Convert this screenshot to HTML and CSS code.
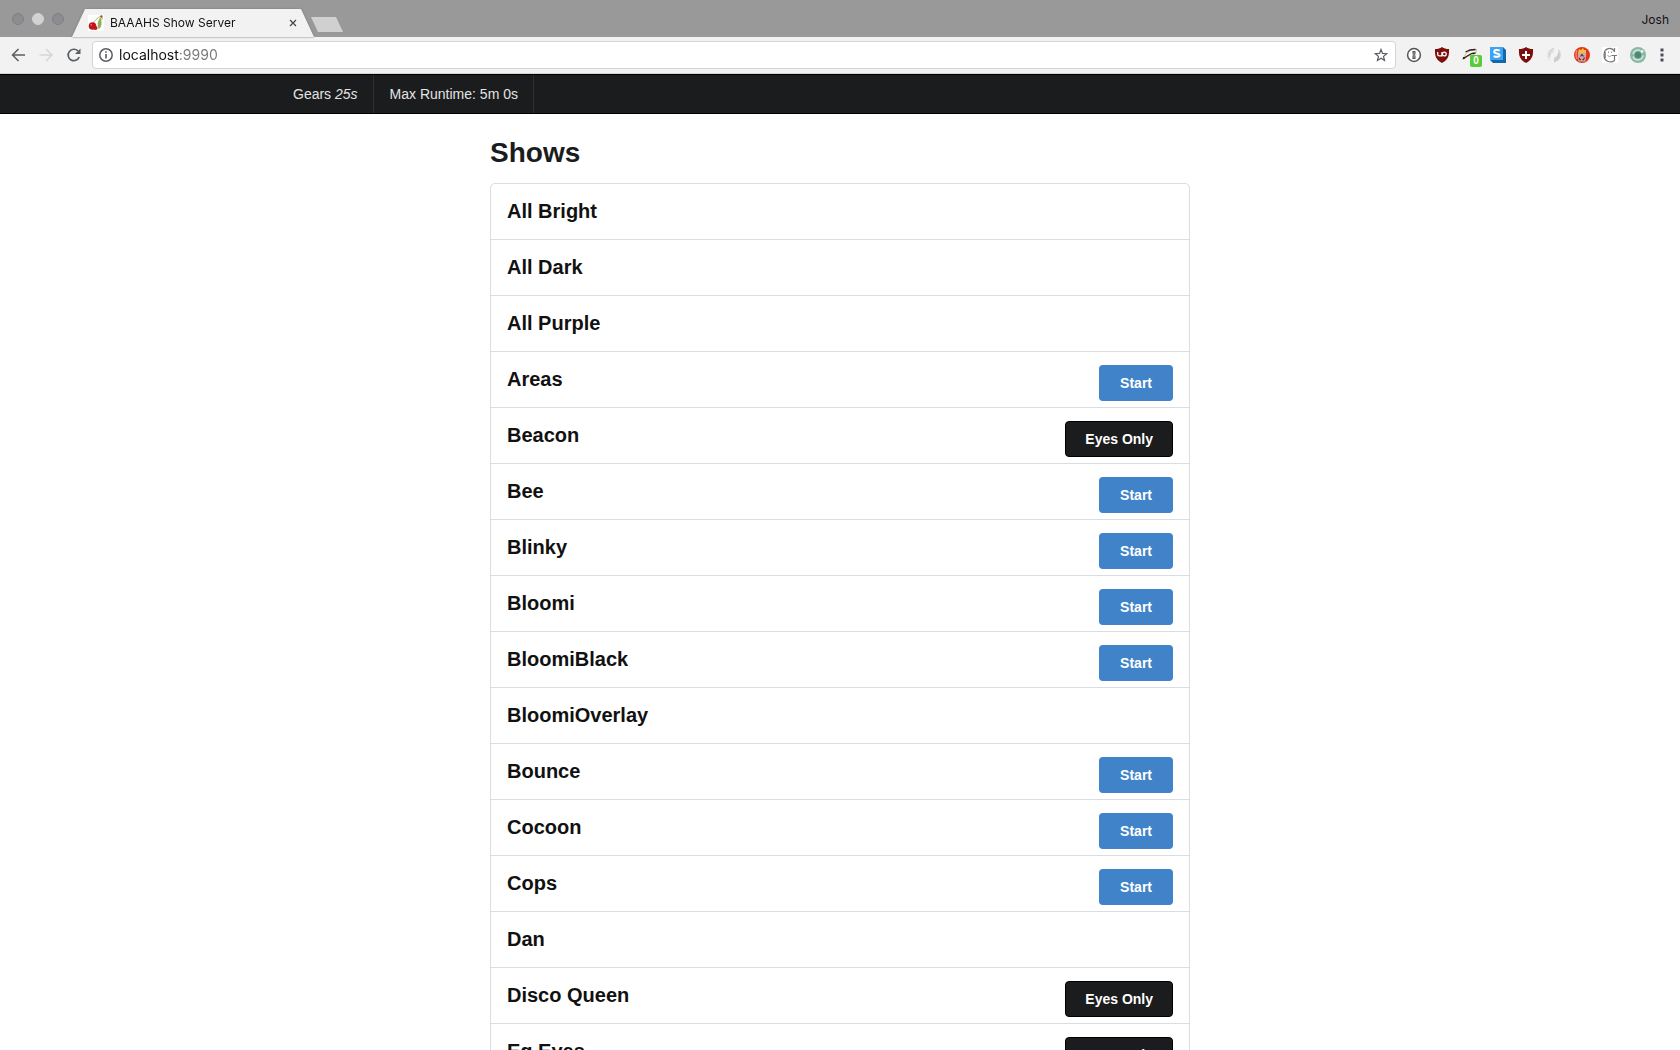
FILE: index.html
```html
<!DOCTYPE html>
<html lang="en">
<head>
    <meta charset="UTF-8">
    <meta name="viewport" content="width=device-width, initial-scale=1.0">
    <title>BAAAHS Show Server</title>
    <link rel="stylesheet" href="styles.css">
</head>
<body>
    <header class="browser">
        <div class="tabbar">
            <div class="lights">
                <span class="light"></span>
                <span class="light middle"></span>
                <span class="light"></span>
            </div>
            <div class="tab-outline">
                <div class="tab">
                    <svg width="16" height="16" viewBox="0 0 16 16">
                        <rect width="16" height="16" fill="#fff"/>
                        <path d="M13 1C9 3 6 6 5 9M14 1v4" stroke="#a9b860" stroke-width="1" fill="none"/>
                        <path d="M12.500 2c-3 4-3.500 8-2 12 3-1 4-6 2-12z" fill="#8fb055"/>
                        <path d="M12 1l2-1 .6 2-1.600 1z" fill="#9a5a35"/>
                        <circle cx="4.500" cy="11" r="3.800" fill="#c4141c"/>
                        <circle cx="7.500" cy="13" r="2" fill="#c4141c"/>
                        <circle cx="3.200" cy="9.800" r=".8" fill="#e88"/>
                    </svg>
                    <span class="tab-title">BAAAHS Show Server</span>
                    <button class="icon close" aria-label="Close tab">
                        <svg width="8" height="8" viewBox="0 0 8 8"><path d="M1 1l6 6M7 1L1 7" stroke="#444" stroke-width="1.200"/></svg>
                    </button>
                </div>
            </div>
            <button class="new-tab" aria-label="New tab"></button>
            <span class="profile">Josh</span>
        </div>
        <div class="toolbar">
            <button class="icon" aria-label="Back">
                <svg width="16" height="16" viewBox="0 0 16 16"><path d="M15 8H3M8.500 2l-6 6 6 6" fill="none" stroke="#5a5d63" stroke-width="1.500"/></svg>
            </button>
            <button class="icon" aria-label="Forward">
                <svg width="16" height="16" viewBox="0 0 16 16"><path d="M1.500 8h12M8 2l6 6-6 6" fill="none" stroke="#d6d6d6" stroke-width="1.500"/></svg>
            </button>
            <button class="icon" aria-label="Reload">
                <svg width="16" height="16" viewBox="0 0 16 16"><path d="M13.200 10A5.700 5.700 0 1 1 12 4" fill="none" stroke="#5a5d63" stroke-width="1.700"/><path d="M14.500 1.500v5.500H9z" fill="#5a5d63"/></svg>
            </button>
            <div class="address">
                <svg width="14" height="14" viewBox="0 0 14 14"><circle cx="7" cy="7" r="6.200" fill="none" stroke="#5a5d63" stroke-width="1.500"/><path d="M7 6v4.500M7 3.300v1.500" stroke="#5a5d63" stroke-width="1.600"/></svg>
                <input type="text" class="url" value="localhost:9990" aria-label="Address">
                <button class="icon" aria-label="Bookmark">
                    <svg width="14" height="14" viewBox="0 0 14 14"><path d="M7 1.500l1.500 3.900 4.200.3-3.200 2.700 1 4.100L7 10.300l-3.500 2.200 1-4.100L1.300 5.700l4.200-.3z" fill="none" stroke="#5a5d63" stroke-width="1.200"/></svg>
                </button>
            </div>
            <div class="extensions">
                <button class="icon" aria-label="Passwords">
                    <svg width="16" height="16" viewBox="0 0 16 16"><circle cx="8" cy="8" r="6.400" fill="#fff" stroke="#555" stroke-width="1.500"/><path d="M6.500 4h3v3.200l-.6.8.6.8V12h-3V8.800l.6-.8-.6-.8z" fill="#555"/><path d="M8 5v6" stroke="#ddd" stroke-width=".6"/></svg>
                </button>
                <button class="icon" aria-label="Ad blocker">
                    <svg width="16" height="16" viewBox="0 0 16 16"><path d="M8 0c2 1.500 4 2 7 2 .4 7-1 11-7 14C2 13 .6 9 1 2c3 0 5-.5 7-2z" fill="#7c0f0c"/><path d="M3.700 5v2.200q0 1.700 1.700 1.700H8V5" fill="none" stroke="#fff" stroke-width="1.300"/><circle cx="10.300" cy="7" r="1.900" fill="none" stroke="#fff" stroke-width="1.300"/></svg>
                </button>
                <button class="icon badge-host" aria-label="Tracker blocker">
                    <svg width="16" height="16" viewBox="0 0 16 16"><path d="M1 11.500L4.500 6 9 3.500l5.500-1-.8 3.500-3.700 2.500-4 .5-4 3z" fill="#fff" stroke="#d99b6c" stroke-width=".8"/><path d="M3.500 5L8 3l5.500-.5M1 11.500l2-1 3-2 4-2 3.500-.5" fill="none" stroke="#222" stroke-width="1.300"/><path d="M.5 12.500l1-2.500 2 1z" fill="#111"/></svg>
                    <span class="badge">0</span>
                </button>
                <button class="icon" aria-label="Stylish">
                    <svg width="16" height="16" viewBox="0 0 16 16"><path d="M0 0h13l3 3v13H3l-3-3z" fill="#1767a8"/><path d="M0 0h13v13H0z" fill="#3da3f5"/><path d="M9.700 3.700C8 2.600 4.200 2.700 4.200 4.700c0 2.300 5.300 1.100 5.300 3.500 0 2-3.800 2-5.800.9" fill="none" stroke="#fff" stroke-width="2"/></svg>
                </button>
                <button class="icon" aria-label="Protection">
                    <svg width="16" height="16" viewBox="0 0 16 16"><path d="M8 0c2 1.500 4 2 7 2 .4 7-1 11-7 14C2 13 .6 9 1 2c3 0 5-.5 7-2z" fill="#7c0f0c"/><path d="M8 4v8M4 8h8" stroke="#fff" stroke-width="2"/></svg>
                </button>
                <button class="icon" aria-label="Sync">
                    <svg width="16" height="16" viewBox="0 0 16 16"><path d="M8 1C1 2-1 10 4 14c-1-5 0-7 4-9z" fill="#e0e0e0"/><path d="M8 15c7-1 9-9 4-13 1 5 0 7-4 9z" fill="#cfcfcf"/><path d="M8 1c-4 2-5 5-4 9M8 15c4-2 5-5 4-9" fill="none" stroke="#c4c4c4" stroke-width=".8"/></svg>
                </button>
                <button class="icon" aria-label="Cleaner">
                    <svg width="16" height="16" viewBox="0 0 16 16"><circle cx="8" cy="8" r="8" fill="#e3331c"/><path d="M3 3q-2 4 0 9" fill="none" stroke="#ff8066" stroke-width="1.500"/><path d="M4 6l1-4 2 1 2-2 1 2 2 0 0 3z" fill="#efc13d"/><path d="M3.800 6h8.400L11.500 14.500h-7z" fill="#d9a5a3"/><path d="M6.500 9.500l1.500-2 1.500 2M10.500 10.500l-1 2.200H8.300M7 12.700H6l-.8-2" fill="none" stroke="#3c4358" stroke-width="1.200"/></svg>
                </button>
                <button class="icon" aria-label="Ghost">
                    <svg width="16" height="16" viewBox="0 0 16 16"><rect width="16" height="16" fill="#fff"/><path d="M12.500 4.500C10 0 2 0 2 8c0 7.500 7.500 8 10.500 5.500V8.500M9.500 8.500H15M12.500 1v4" fill="none" stroke="#777" stroke-width="1.200"/><path d="M3 5v6" stroke="#777" stroke-width="1.500"/><path d="M5.500 8.500q2 2.500 4 0M6.500 4.500v1.500M9.500 4.500v1.500" fill="none" stroke="#999"/></svg>
                </button>
                <button class="icon" aria-label="Orbit">
                    <svg width="16" height="16" viewBox="0 0 16 16"><circle cx="8" cy="8" r="8" fill="#8ab9a5"/><circle cx="8" cy="8" r="3.200" fill="#548573"/><path d="M10.500 3.500A5.200 5.200 0 0 0 3 7M3 9.500a5.200 5.200 0 0 0 10-1" fill="none" stroke="#d9ebe3" stroke-width="1.300"/><circle cx="12" cy="4.500" r="1.400" fill="#eef7f3"/></svg>
                </button>
                <button class="icon more" aria-label="Menu">
                    <svg width="4" height="14" viewBox="0 0 4 14"><path d="M.5 .5h3v3h-3zM.5 5.500h3v3h-3zM.5 10.500h3v3h-3z" fill="#4a4f57"/></svg>
                </button>
            </div>
        </div>
    </header>

    <nav class="navbar">
        <div class="nav-inner">
            <div class="nav-item">Gears <em>25s</em></div>
            <div class="nav-item">Max Runtime: 5m 0s</div>
        </div>
    </nav>

    <main class="content">
        <h1>Shows</h1>
        <ul class="shows">
            <li><h3>All Bright</h3></li>
            <li><h3>All Dark</h3></li>
            <li><h3>All Purple</h3></li>
            <li><h3>Areas</h3><button class="btn start">Start</button></li>
            <li><h3>Beacon</h3><button class="btn eyes">Eyes Only</button></li>
            <li><h3>Bee</h3><button class="btn start">Start</button></li>
            <li><h3>Blinky</h3><button class="btn start">Start</button></li>
            <li><h3>Bloomi</h3><button class="btn start">Start</button></li>
            <li><h3>BloomiBlack</h3><button class="btn start">Start</button></li>
            <li><h3>BloomiOverlay</h3></li>
            <li><h3>Bounce</h3><button class="btn start">Start</button></li>
            <li><h3>Cocoon</h3><button class="btn start">Start</button></li>
            <li><h3>Cops</h3><button class="btn start">Start</button></li>
            <li><h3>Dan</h3></li>
            <li><h3>Disco Queen</h3><button class="btn eyes">Eyes Only</button></li>
            <li><h3>Eg Eyes</h3><button class="btn eyes">Eyes Only</button></li>
        </ul>
    </main>
</body>
</html>
```
FILE: styles.css
```css
* {
    box-sizing: border-box;
}

body {
    margin: 0;
    height: 100vh;
    display: flex;
    flex-direction: column;
    overflow: hidden;
    background-color: #fff;
    color: #1b1c1d;
    font-family: "Liberation Sans", Arial, sans-serif;
}

button {
    border: none;
    padding: 0;
    cursor: pointer;
}

svg {
    display: block;
    flex: none;
}

/* browser window */
.browser {
    flex: none;
    font-family: Inter, sans-serif;
}

.tabbar {
    display: flex;
    height: 37px;
    padding: 0 11px 0 12px;
    background-color: #999;
}

.lights {
    display: flex;
    gap: 8px;
    width: 60px;
    padding-top: 13px;
}

.light {
    width: 12px;
    height: 12px;
    border: 1px solid #808085;
    border-radius: 50%;
    background-color: #8c8c91;
}

.light.middle {
    border-color: #d2d2d2;
    background-color: #d2d2d2;
}

.tab-outline {
    margin-top: 9px;
    filter: drop-shadow(0 0 1px #777);
}

.tab {
    display: flex;
    align-items: center;
    width: 242px;
    height: 28px;
    padding: 0 16px 1px;
    background-color: #f2f2f2;
    clip-path: polygon(13px 0, 229px 0, 100% 100%, 0 100%);
}

.tab-title {
    flex: 1;
    margin-left: 6px;
    color: #111;
    font-size: 12px;
}

.icon {
    display: flex;
    align-items: center;
    justify-content: center;
    width: 28px;
    height: 28px;
    background: none;
}

.icon.close {
    width: 10px;
}

.new-tab {
    width: 32px;
    height: 15px;
    margin-top: 17px;
    margin-left: -3px;
    background-color: #d0d0d0;
    clip-path: polygon(0 0, 25px 0, 100% 100%, 7px 100%);
}

.profile {
    margin-left: auto;
    color: #111;
    font-size: 12px;
    line-height: 40px;
}

.toolbar {
    display: flex;
    align-items: center;
    height: 37px;
    padding: 0 8px 1px 4px;
    border-bottom: 1px solid #d5d5d5;
    background-color: #f2f2f2;
}

.address {
    flex: 1;
    display: flex;
    align-items: center;
    height: 28px;
    margin: 0 4px;
    padding-left: 6px;
    border: 1px solid #d5d5d5;
    border-radius: 4px;
    background-color: #fff;
}

/* host is dark, port is grey */
.url {
    flex: 1;
    margin-left: 6px;
    padding: 0;
    border: none;
    outline: none;
    font-family: Inter, sans-serif;
    font-size: 14px;
    color: transparent;
    background: linear-gradient(to right, #111 60px, #777 60px);
    -webkit-background-clip: text;
    background-clip: text;
}

.extensions {
    display: flex;
}

.badge-host {
    position: relative;
}

.badge {
    position: absolute;
    right: 2px;
    bottom: 2px;
    width: 12px;
    height: 12px;
    border-radius: 2px;
    background-color: #58cc38;
    color: #fff;
    font-size: 10px;
    font-weight: bold;
    line-height: 12px;
}

.icon.more {
    width: 20px;
}

/* page */
.navbar {
    flex: none;
    height: 40px;
    border-top: 1px solid #000;
    border-bottom: 1px solid #000;
    background-color: #1b1c1d;
}

.nav-inner {
    display: flex;
    height: 100%;
    max-width: 1126px;
    margin: 0 auto;
}

.nav-item {
    padding: 0 15px 0 16px;
    border-right: 1px solid #2f3031;
    color: #e3e3e3;
    font-size: 14px;
    line-height: 38px;
}

.content {
    flex: 1;
    width: 100%;
    max-width: 700px;
    min-height: 0;
    margin: 0 auto;
    padding-top: 23px;
}

h1 {
    margin: 0 0 14px;
    font-size: 28px;
    line-height: 32px;
}

.shows {
    margin: 0;
    padding: 0;
    list-style: none;
    border: 1px solid #dcddde;
    border-radius: 5px;
}

.shows li {
    display: flex;
    justify-content: space-between;
    height: 56px;
    padding: 13px 16px 0;
    border-bottom: 1px solid #dcddde;
}

.shows h3 {
    margin: 0;
    color: #111;
    font-size: 20px;
    line-height: 28px;
}

.btn {
    height: 36px;
    padding: 0 21px;
    border-radius: 4px;
    color: #fff;
    font-family: inherit;
    font-size: 14px;
    font-weight: bold;
}

.btn.start {
    background-color: #4183c9;
}

.btn.eyes {
    padding: 0 19px;
    border: 1px solid #000;
    background-color: #1b1c1d;
}
```
